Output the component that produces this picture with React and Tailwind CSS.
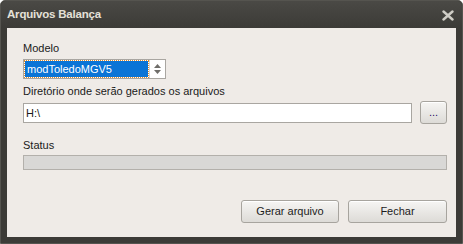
const font = { fontFamily: '"Liberation Sans", Arial, sans-serif' };

function Btn({ children, className = '' }) {
  return (
    <button
      className={`h-[23px] rounded-[3px] border border-[#a7a49e] bg-gradient-to-b from-[#f6f5f3] to-[#dddbd7] text-[11px] text-[#1c1c1c] shadow-[inset_0_1px_0_#ffffff] ${className}`}
    >
      {children}
    </button>
  );
}

export default function App() {
  return (
    <div className="w-[463px] h-[244px] bg-[#3c3b37] rounded-t-[5px] border border-[#55544f] flex flex-col" style={font}>
      <div className="h-[27px] flex items-center justify-between pl-[6px] pr-[8px] bg-gradient-to-b from-[#4a4945] to-[#3c3b37] rounded-t-[5px]">
        <span className="text-[11.5px] font-bold text-[#e4e0d8] leading-none mt-[1px] tracking-[-0.2px]">Arquivos Balança</span>
        <svg width="12" height="11" viewBox="0 0 12 11" className="mt-[1px]">
          <path d="M1.5 1.5 L10.5 9.5 M10.5 1.5 L1.5 9.5" stroke="#cfcdc6" strokeWidth="2.4" strokeLinecap="round" />
        </svg>
      </div>
      <div className="mx-[6px] h-[209px] bg-[#efebe7] pl-[16px] pr-[9px] text-[11px] text-[#1a1a1a] flex flex-col">
        <div className="mt-[14px] leading-[13px]">Modelo</div>
        <div className="mt-[4px] w-[143px] h-[20px] border border-[#a9a6a1] bg-white flex">
          <div className="flex-1 m-[1px] bg-[#0a74d6] outline outline-1 outline-dotted outline-[#e08b2a] text-white leading-[16px] pl-[2px] text-[11px]">
            modToledoMGV5
          </div>
          <div className="w-[16px] border-l border-[#d8d6d2] flex flex-col items-center justify-center gap-[2px]">
            <svg width="7" height="4" viewBox="0 0 7 4"><path d="M0 4 L3.5 0 L7 4Z" fill="#6f6d69" /></svg>
            <svg width="7" height="4" viewBox="0 0 7 4"><path d="M0 0 L3.5 4 L7 0Z" fill="#6f6d69" /></svg>
          </div>
        </div>
        <div className="mt-[6px] leading-[13px]">Diretório onde serão gerados os arquivos</div>
        <div className="mt-[3px] flex items-center">
          <div className="w-[389px] h-[20px] border border-[#a9a6a1] bg-white leading-[18px] pl-[2px] text-[11px]">H:\</div>
          <Btn className="ml-[8px] w-[27px] text-[#2a0a6a]">...</Btn>
        </div>
        <div className="mt-[15px] leading-[13px]">Status</div>
        <div className="mt-[3px] w-[424px] h-[15px] border border-[#b3b0ab] bg-[#d9d8d6]" />
        <div className="mt-[30px] flex justify-end gap-[9px]">
          <Btn className="w-[98px]">Gerar arquivo</Btn>
          <Btn className="w-[99px]">Fechar</Btn>
        </div>
      </div>
    </div>
  );
}
